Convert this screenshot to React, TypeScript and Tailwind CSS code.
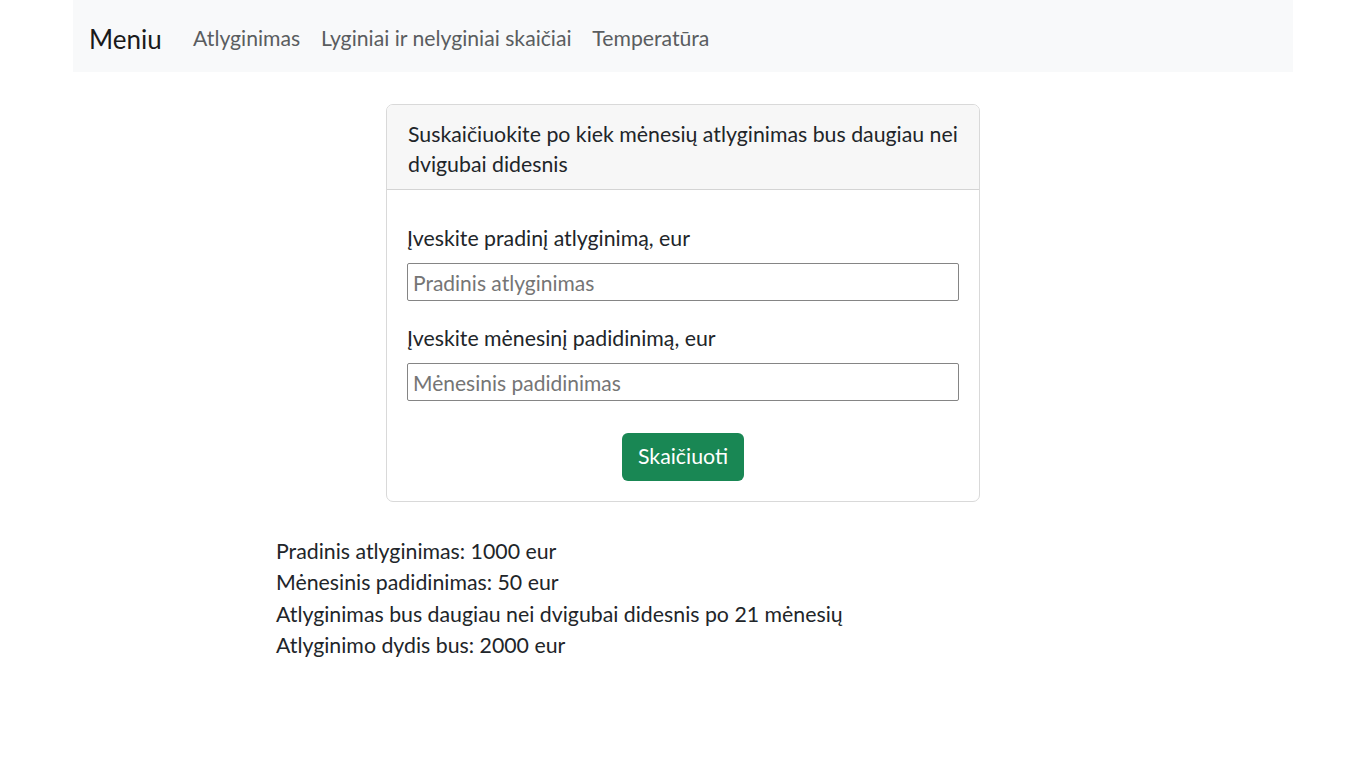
import React from 'react';

const font = { fontFamily: 'Lato, "Noto Sans", sans-serif' };

const links = ['Atlyginimas', 'Lyginiai ir nelyginiai skaičiai', 'Temperatūra'];

const results = [
  'Pradinis atlyginimas: 1000 eur',
  'Mėnesinis padidinimas: 50 eur',
  'Atlyginimas bus daugiau nei dvigubai didesnis po 21 mėnesių',
  'Atlyginimo dydis bus: 2000 eur',
];

export default function App() {
  return (
    <div className="min-h-screen bg-white text-[#212529] font-['Lato','Noto_Sans',sans-serif]">
      <nav className="w-[1220px] mx-auto h-[72px] bg-[#f8f9fa] flex items-center px-[16px] pt-[6px]">
        <span className="text-[26px] text-[#1a1a1a] mr-[21px] leading-none">Meniu</span>
        {links.map((l) => (
          <a key={l} href="#" className="px-[10.4px] text-[21.2px] text-[#5a5d60] leading-none">
            {l}
          </a>
        ))}
      </nav>

      <div className="w-[594px] mx-auto mt-[32px] border border-[#d9d9d9] rounded-[7px] overflow-hidden">
        <div className="bg-[#f7f7f7] border-b border-[#d4d4d4] px-[21px] pt-[14px] pb-[10px] text-[21.3px] leading-[30px]">
          Suskaičiuokite po kiek mėnesių atlyginimas bus daugiau nei dvigubai didesnis
        </div>
        <div className="px-[20px] pt-[33px] pb-[20px] flex flex-col">
          <label className="text-[21.3px] leading-[31px]">Įveskite pradinį atlyginimą, eur</label>
          <input
            placeholder="Pradinis atlyginimas"
            className="mt-[9px] h-[38px] w-[552px] border border-[#858585] rounded-[2px] px-[5px] text-[21px] placeholder:text-[#757575] outline-none"
            style={font}
          />
          <label className="mt-[22px] text-[21.3px] leading-[31px]">Įveskite mėnesinį padidinimą, eur</label>
          <input
            placeholder="Mėnesinis padidinimas"
            className="mt-[9px] h-[38px] w-[552px] border border-[#858585] rounded-[2px] px-[5px] text-[21px] placeholder:text-[#757575] outline-none"
            style={font}
          />
          <div className="flex justify-center mt-[32px]">
            <button className="h-[48px] w-[122px] bg-[#198754] text-white rounded-[6px] text-[21.3px]">
              Skaičiuoti
            </button>
          </div>
        </div>
      </div>

      <div className="w-[814px] mx-auto mt-[34px]">
        {results.map((r) => (
          <div key={r} className="text-[21.3px] leading-[31.3px]">
            {r}
          </div>
        ))}
      </div>
    </div>
  );
}
